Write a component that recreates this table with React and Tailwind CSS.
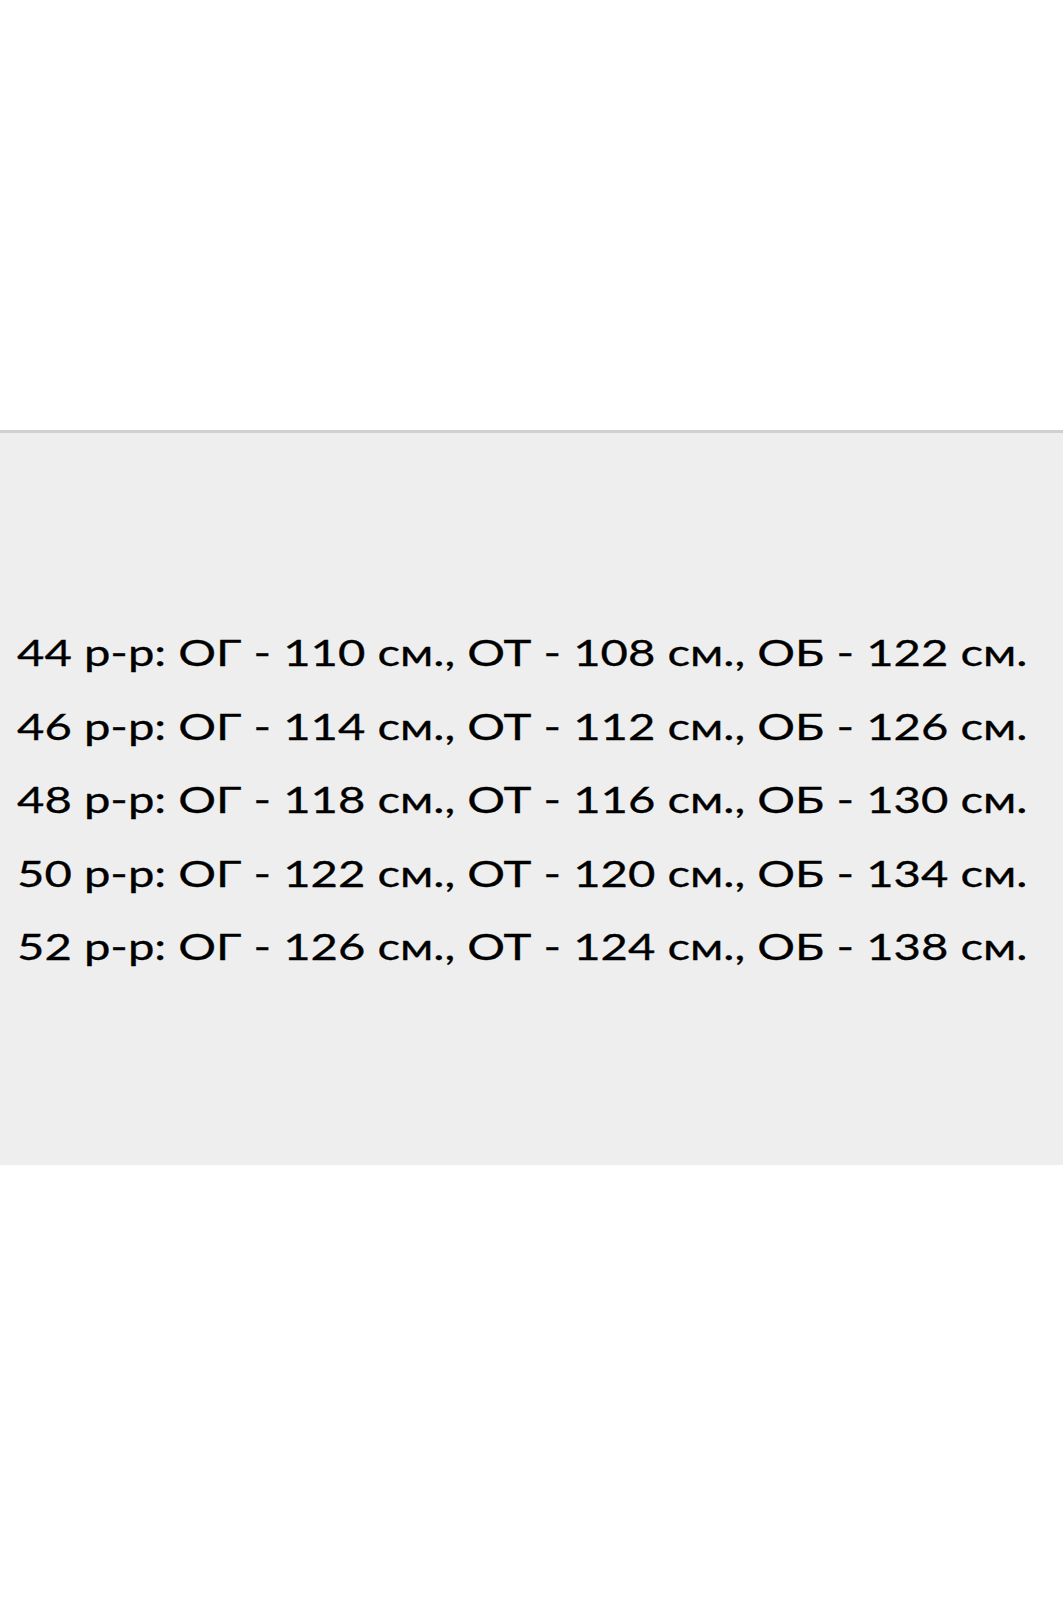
export default function App() {
  const lines = [
    "44 р-р: ОГ - 110 см., ОТ - 108 см., ОБ - 122 см.",
    "46 р-р: ОГ - 114 см., ОТ - 112 см., ОБ - 126 см.",
    "48 р-р: ОГ - 118 см., ОТ - 116 см., ОБ - 130 см.",
    "50 р-р: ОГ - 122 см., ОТ - 120 см., ОБ - 134 см.",
    "52 р-р: ОГ - 126 см., ОТ - 124 см., ОБ - 138 см.",
  ];
  return (
    <div className="w-[1063px] h-[1600px] bg-white flex flex-col overflow-hidden">
      <div className="h-[430px] bg-white" />
      <div className="h-[735px] bg-[#eeeeee] border-t-[3px] border-[#d0d0d0] flex flex-col justify-center pl-[17px]">
        <div className="flex flex-col" style={{ fontFamily: "Lato, 'Open Sans', sans-serif" }}>
          {lines.map((l) => (
            <div
              key={l}
              className="text-[36px] leading-[71.5px] font-normal text-black whitespace-nowrap origin-left scale-x-[1.312] pt-[2px] [-webkit-text-stroke:0.3px_#000]"
            >
              {l}
            </div>
          ))}
        </div>
      </div>
      <div className="flex-1 bg-white" />
    </div>
  );
}
